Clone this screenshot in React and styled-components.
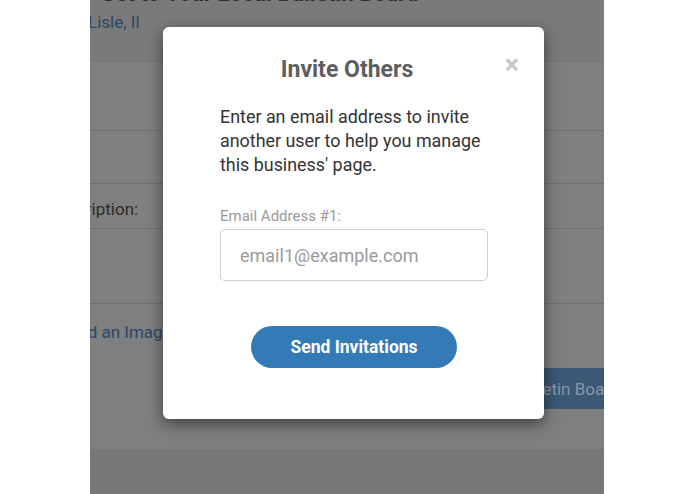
import React from "react";
import styled, { createGlobalStyle } from "styled-components";

const Global = createGlobalStyle`
  html, body { margin: 0; padding: 0; background: #ffffff; }
  body { font-family: Roboto, "Liberation Sans", Arial, sans-serif; }
  * { box-sizing: border-box; }
`;

const Screen = styled.div`
  width: 695px;
  height: 494px;
  display: flex;
  justify-content: flex-start;
  background: #ffffff;
  overflow: hidden;
`;

const Panel = styled.div`
  position: relative;
  margin-left: 90px;
  width: 514px;
  height: 494px;
  background: #7f7f7f;
  overflow: hidden;
`;

const Page = styled.div`
  margin-left: -42px;
  width: 700px;
  display: flex;
  flex-direction: column;
`;

const Header = styled.div`
  height: 62px;
  background: #7a7a7a;
  border-bottom: 1px solid #767676;
  display: flex;
  flex-direction: column;
`;

const Heading = styled.h1`
  margin: -21px 0 0 52px;
  font-size: 22.3px;
  line-height: 28px;
  font-weight: 700;
  color: #2c2c2c;
  white-space: nowrap;
`;

const Location = styled.a`
  margin: 4px 0 0 40px;
  font-size: 17px;
  line-height: 22px;
  color: #2b4866;
  text-decoration: none;
`;

const Row = styled.div`
  height: ${(p) => p.$h}px;
  border-bottom: 1px solid ${(p) => (p.$line ? "#6e6e6e" : "transparent")};
  display: flex;
  align-items: center;
  padding: ${(p) => p.$shift || 0}px 0 0 0;
  font-size: 17px;
  color: #2b2b2b;
`;

const UploadArea = styled.div`
  height: 145px;
  display: flex;
  flex-direction: column;
  padding: 17px 0 0 0;
`;

const UploadLink = styled.span`
  margin-left: -4px;
  font-size: 17px;
  line-height: 22px;
  color: #2b4866;
`;

const SubmitBar = styled.div`
  display: flex;
  margin-top: 25px;
  padding-left: 396px;
`;

const SubmitButton = styled.div`
  height: 41px;
  padding: 0 12px;
  display: flex;
  align-items: center;
  background: #3b5875;
  color: #8796a6;
  font-size: 17px;
  white-space: nowrap;
  border-radius: 3px;
`;

const Footer = styled.div`
  height: 60px;
  background: #777777;
`;

const Modal = styled.div`
  position: absolute;
  left: 73px;
  top: 27px;
  width: 381px;
  background: #ffffff;
  border-radius: 6px;
  box-shadow: 0 5px 15px rgba(0, 0, 0, 0.5);
  padding: 30px 56px 51px 57px;
  display: flex;
  flex-direction: column;
`;

const Title = styled.h2`
  margin: 0;
  padding-right: 14px;
  text-align: center;
  font-size: 23px;
  line-height: 26px;
  font-weight: 700;
  color: #5e5e5e;
`;

const Close = styled.button`
  position: absolute;
  top: 25px;
  right: 25px;
  border: 0;
  background: transparent;
  padding: 0;
  font-family: Roboto, "Liberation Sans", Arial, sans-serif;
  font-size: 27px;
  line-height: 26px;
  font-weight: 700;
  color: #c8c8c8;
  cursor: pointer;
`;

const Text = styled.p`
  margin: 22px 0 0 0;
  font-size: 17.9px;
  line-height: 24px;
  color: #333333;
`;

const Label = styled.label`
  margin-top: 29px;
  font-size: 15px;
  line-height: 20px;
  color: #9a9a9a;
`;

const Input = styled.input`
  margin-top: 3px;
  height: 52px;
  width: 100%;
  border: 1px solid #cfcfcf;
  border-radius: 5px;
  padding: 0 19px;
  font-family: Roboto, "Liberation Sans", Arial, sans-serif;
  font-size: 18px;
  color: #555;
  outline: none;
  &::placeholder { color: #9a9a9a; }
`;

const Send = styled.button`
  margin: 45px auto 0 auto;
  width: 206px;
  height: 42px;
  border: 0;
  border-radius: 21px;
  background: #337ab7;
  color: #ffffff;
  font-family: Roboto, "Liberation Sans", Arial, sans-serif;
  font-size: 17.5px;
  font-weight: 700;
  cursor: pointer;
`;

export default function App() {
  return (
    <>
      <Global />
      <Screen>
        <Panel>
          <Page>
            <Header>
              <Heading>Get to Your Local Bulletin Board</Heading>
              <Location>Lisle, Il</Location>
            </Header>
            <Row $h={69} $line />
            <Row $h={53} $line />
            <Row $h={45} $line $shift={5}>Description:</Row>
            <Row $h={75} $line />
            <UploadArea>
              <UploadLink>Upload an Image</UploadLink>
              <SubmitBar>
                <SubmitButton>Post to Bulletin Board</SubmitButton>
              </SubmitBar>
            </UploadArea>
            <Footer />
          </Page>
          <Modal>
            <Close aria-label="Close">×</Close>
            <Title>Invite Others</Title>
            <Text>
              Enter an email address to invite another user to help you manage
              this business' page.
            </Text>
            <Label>Email Address #1:</Label>
            <Input placeholder="email1@example.com" />
            <Send>Send Invitations</Send>
          </Modal>
        </Panel>
      </Screen>
    </>
  );
}
